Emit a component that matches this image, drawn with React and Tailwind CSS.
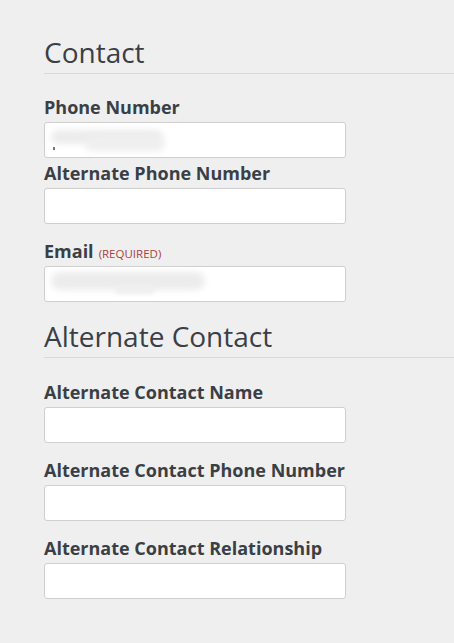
import React from 'react';

function Heading({ children }) {
    return (
        <h2 className="text-[28px] leading-[34px] font-normal text-[#3a3f46] pb-[4px] border-b border-[#d9d9d9]">
            {children}
        </h2>
    );
}

function Field({ label, required, smudge }) {
    return (
        <div className="flex flex-col gap-[3px]">
            <label className="text-[18px] leading-[24px] font-bold text-[#3a3f46]">
                {label}
                {required && <span className="ml-[5px] text-[11.5px] leading-none font-normal uppercase text-[#a8423f]">(Required)</span>}
            </label>
            <div className="relative w-[302px] h-[36px] bg-white border border-[#cfcfcf] rounded-[3px] overflow-hidden">
                {smudge}
            </div>
        </div>
    );
}

export default function App() {
    const phoneSmudge = (
        <>
            <div className="absolute left-[6px] top-[7px] w-[112px] h-[14px] rounded-full bg-[#ececec] blur-[3px]" />
            <div className="absolute left-[40px] top-[14px] w-[80px] h-[14px] rounded-full bg-[#efefef] blur-[3px]" />
            <div className="absolute left-[8px] top-[24px] w-[2px] h-[3px] bg-[#777]" />
        </>
    );
    const emailSmudge = (
        <>
            <div className="absolute left-[6px] top-[5px] w-[154px] h-[18px] rounded-full bg-[#ececec] blur-[3px]" />
            <div className="absolute left-[70px] top-[18px] w-[40px] h-[9px] rounded-full bg-[#efefef] blur-[2px]" />
        </>
    );
    return (
        <div className="min-h-[643px] w-[454px] bg-[#efefef] pl-[44px] pt-[35px] flex flex-col" style={{ fontFamily: '"Open Sans", "Liberation Sans", sans-serif' }}>
            <Heading>Contact</Heading>
            <div className="mt-[21px] flex flex-col gap-[15px]">
                <div className="flex flex-col gap-[3px]">
                    <Field label="Phone Number" smudge={phoneSmudge} />
                    <Field label="Alternate Phone Number" />
                </div>
                <Field label="Email" required smudge={emailSmudge} />
            </div>
            <div className="mt-[17px]">
                <Heading>Alternate Contact</Heading>
            </div>
            <div className="mt-[22px] flex flex-col gap-[15px]">
                <Field label="Alternate Contact Name" />
                <Field label="Alternate Contact Phone Number" />
                <Field label="Alternate Contact Relationship" />
            </div>
        </div>
    );
}
